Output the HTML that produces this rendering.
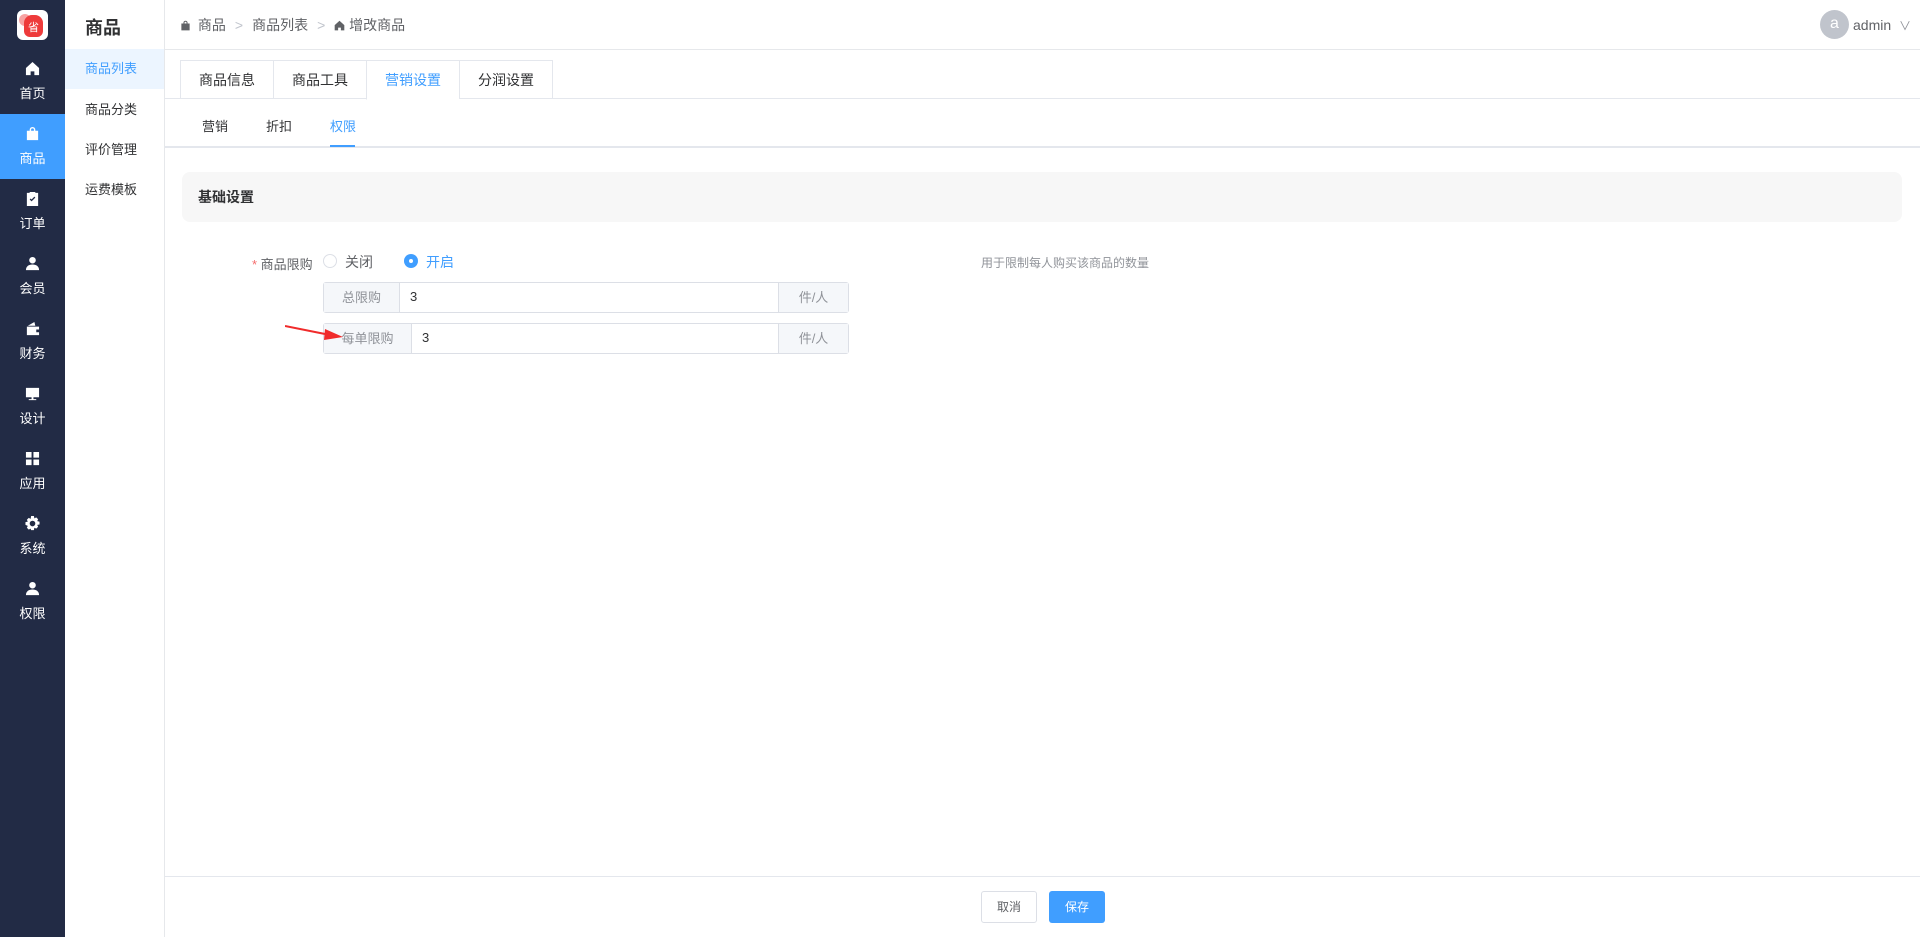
<!DOCTYPE html>
<html><head><meta charset="utf-8"><style>
*{margin:0;padding:0;box-sizing:border-box}
body{width:1920px;height:937px;position:relative;overflow:hidden;background:#fff;font-family:"Liberation Sans","Noto Sans CJK SC",sans-serif;font-size:14px;color:#303133}
.a{position:absolute}
.side{left:0;top:0;width:65px;height:937px;background:#222b45}
.nav{position:absolute;left:0;width:65px;height:65px;color:#fff;text-align:center;font-size:13px}
.nav svg{position:absolute;left:25px;top:12px;width:15px;height:15px;fill:#fff}
.nav span{position:absolute;left:0;right:0;top:34px}
.nav.on{background:#409eff}
.sub{left:65px;top:0;width:100px;height:937px;border-right:1px solid #e6e8eb;background:#fff}
.mi{position:absolute;left:0;width:99px;height:40px;line-height:40px;padding-left:20px;font-size:13px;color:#303133}
.tab{position:absolute;top:60px;height:39px;border:1px solid #e4e7ed;border-right:none;line-height:38px;text-align:center;font-size:14px;color:#303133;background:#fff}
.grp{position:absolute;left:323px;width:526px;height:31px;border:1px solid #dcdfe6;border-radius:3px;font-size:13px}
.pre{position:absolute;left:0;top:0;bottom:0;background:#f5f7fa;border-right:1px solid #dcdfe6;color:#909399;text-align:center;line-height:29px}
.suf{position:absolute;right:0;top:0;bottom:0;width:70px;background:#f5f7fa;border-left:1px solid #dcdfe6;color:#909399;text-align:center;line-height:29px}
</style></head><body>
<div class="a side">
 <div class="a" style="left:17px;top:10px;width:31px;height:30px;border-radius:6px;background:#fff;overflow:hidden">
  <div class="a" style="left:2px;top:4px;width:12px;height:12px;border-radius:50%;background:#f7a3a3"></div>
  <div class="a" style="left:7px;top:5px;width:19px;height:22px;border-radius:8px 8px 6px 6px;background:#ee3b3b;color:#fff;font-size:11px;text-align:center;line-height:26px">省</div>
 </div>
 <div class="nav" style="top:49px"><svg viewBox="0 0 16 16"><path d="M8 1L1 7.5V15h5v-4h4v4h5V7.5z"/></svg><span>首页</span></div>
 <div class="nav on" style="top:114px"><svg viewBox="0 0 16 16"><path d="M5 5V4a3 3 0 016 0v1h3v10H2V5zm1.5 0h3V4a1.5 1.5 0 00-3 0z"/></svg><span>商品</span></div>
 <div class="nav" style="top:179px"><svg viewBox="0 0 16 16"><path d="M2 2h3V1h6v1h3v14H2zm3 7l2 2 4-4-1-1-3 3-1-1z"/></svg><span>订单</span></div>
 <div class="nav" style="top:244px"><svg viewBox="0 0 16 16"><circle cx="8" cy="4.5" r="3.5"/><path d="M1 15c0-4 3-6 7-6s7 2 7 6z"/></svg><span>会员</span></div>
 <div class="nav" style="top:309px"><svg viewBox="0 0 16 16"><path d="M2 6h13v9H2zM3 5l7-4 1 4zm9 4v3h3V9z"/></svg><span>财务</span></div>
 <div class="nav" style="top:374px"><svg viewBox="0 0 16 16"><path d="M1 2h14v10H1zm6 10h2v2h3v1H4v-1h3z"/></svg><span>设计</span></div>
 <div class="nav" style="top:439px"><svg viewBox="0 0 16 16"><path d="M1 1h6v6H1zm8 0h6v6H9zM1 9h6v6H1zm8 0h6v6H9z"/></svg><span>应用</span></div>
 <div class="nav" style="top:504px"><svg viewBox="0 0 16 16"><path d="M6.5 0h3l.5 2.5 2-1 2 2-1 2 2.5.5v3l-2.5.5 1 2-2 2-2-1-.5 2.5h-3L6 13.5l-2 1-2-2 1-2L.5 9.5v-3L3 6 2 4l2-2 2 1zM8 5a3 3 0 100 6 3 3 0 000-6z"/></svg><span>系统</span></div>
 <div class="nav" style="top:569px"><svg viewBox="0 0 16 16"><circle cx="8" cy="4.5" r="3.5"/><path d="M1 15c0-4 3-6 7-6s7 2 7 6z"/></svg><span>权限</span></div>
</div>
<div class="a sub">
 <div class="a" style="left:20px;top:14px;font-size:18px;font-weight:bold;color:#303133">商品</div>
 <div class="mi" style="top:49px;background:#ecf5ff;color:#409eff">商品列表</div>
 <div class="mi" style="top:90px">商品分类</div>
 <div class="mi" style="top:130px">评价管理</div>
 <div class="mi" style="top:170px">运费模板</div>
</div>
<div class="a" style="left:165px;top:0;right:0;height:50px;border-bottom:1px solid #e6e8eb"></div>
<div class="a" style="left:180px;top:15px;font-size:14px;color:#606266;white-space:nowrap">
 <svg width="11" height="11" viewBox="0 0 16 16" style="fill:#606266;vertical-align:-1px"><path d="M5 5V4a3 3 0 016 0v1h3v10H2V5zm1.5 0h3V4a1.5 1.5 0 00-3 0z"/></svg>
 <span style="margin-left:3px">商品</span><span style="color:#c0c4cc;margin:0 9px">&gt;</span>商品列表<span style="color:#c0c4cc;margin:0 9px">&gt;</span><svg width="11" height="11" viewBox="0 0 16 16" style="fill:#606266;vertical-align:-1px"><path d="M8 1L1 7.5V15h5v-4h4v4h5V7.5z"/></svg> 增改商品
</div>
<div class="a" style="left:1820px;top:10px;width:29px;height:29px;border-radius:50%;background:#c0c4cc;color:#fff;text-align:center;line-height:28px;font-size:16px">a</div>
<div class="a" style="left:1853px;top:17px;font-size:14px;color:#606266">admin <span style="color:#909399;font-size:12px;margin-left:4px">&#8744;</span></div>

<div class="a" style="left:165px;top:98px;right:0;height:1px;background:#e4e7ed"></div>
<div class="tab" style="left:180px;width:93px">商品信息</div>
<div class="tab" style="left:273px;width:93px">商品工具</div>
<div class="tab" style="left:366px;width:93px;color:#409eff;border-bottom-color:#fff;height:40px">营销设置</div>
<div class="tab" style="left:459px;width:94px;border-right:1px solid #e4e7ed">分润设置</div>

<div class="a" style="left:165px;top:146px;right:0;height:2px;background:#e4e7ed"></div>
<div class="a" style="left:202px;top:116px;font-size:13px">营销</div>
<div class="a" style="left:266px;top:116px;font-size:13px">折扣</div>
<div class="a" style="left:330px;top:116px;font-size:13px;color:#409eff">权限</div>
<div class="a" style="left:330px;top:145px;width:25px;height:2px;background:#409eff"></div>

<div class="a" style="left:182px;top:172px;width:1720px;height:50px;background:#f7f7f7;border-radius:8px"></div>
<div class="a" style="left:198px;top:187px;font-size:14px;font-weight:bold;color:#303133">基础设置</div>

<div class="a" style="left:252px;top:254px;font-size:13px;color:#606266"><span style="color:#f56c6c">*</span> 商品限购</div>
<div class="a" style="left:323px;top:254px;width:14px;height:14px;border:1px solid #dcdfe6;border-radius:50%"></div>
<div class="a" style="left:345px;top:252px;font-size:14px;color:#606266">关闭</div>
<div class="a" style="left:404px;top:254px;width:14px;height:14px;border-radius:50%;background:#409eff"><div class="a" style="left:5px;top:5px;width:4px;height:4px;border-radius:50%;background:#fff"></div></div>
<div class="a" style="left:426px;top:252px;font-size:14px;color:#409eff">开启</div>
<div class="a" style="left:981px;top:254px;font-size:12px;color:#909399">用于限制每人购买该商品的数量</div>

<div class="grp" style="top:282px"><div class="pre" style="width:76px">总限购</div><div class="a" style="left:86px;top:6px">3</div><div class="suf">件/人</div></div>
<div class="grp" style="top:323px"><div class="pre" style="width:88px">每单限购</div><div class="a" style="left:98px;top:6px">3</div><div class="suf">件/人</div></div>
<svg class="a" style="left:285px;top:324px" width="60" height="18" viewBox="0 0 60 18"><path d="M0 2L45 11" stroke="#f02b2b" stroke-width="2"/><path d="M40 5L58 13 39 16z" fill="#f02b2b"/></svg>

<div class="a" style="left:165px;top:876px;right:0;height:1px;background:#e4e7ed"></div>
<div class="a" style="left:981px;top:891px;width:56px;height:32px;border:1px solid #dcdfe6;border-radius:3px;text-align:center;line-height:30px;font-size:12px;color:#606266">取消</div>
<div class="a" style="left:1049px;top:891px;width:56px;height:32px;background:#409eff;border-radius:3px;text-align:center;line-height:32px;font-size:12px;color:#fff">保存</div>
</body></html>
